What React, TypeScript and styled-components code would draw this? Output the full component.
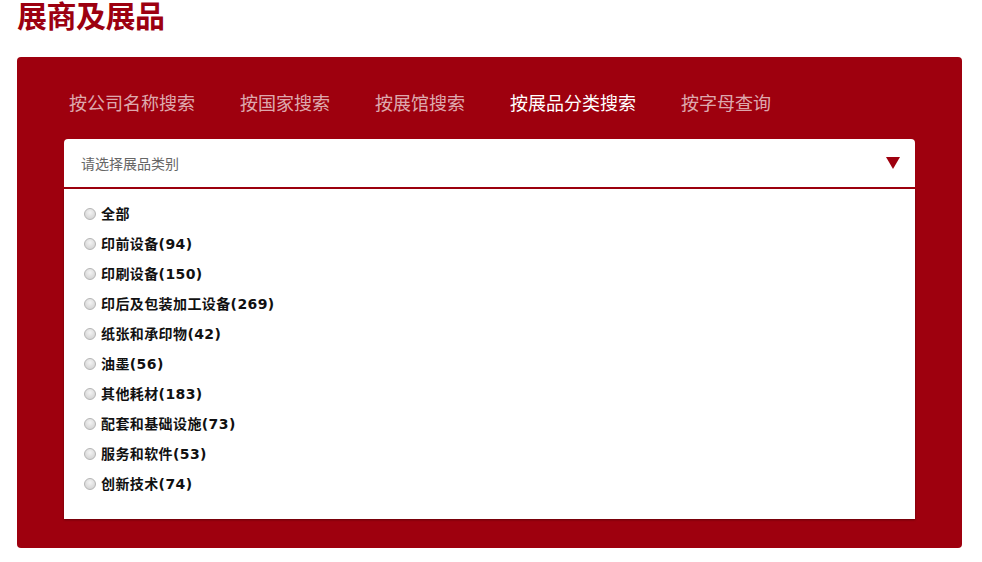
import React from "react";
import styled, { createGlobalStyle } from "styled-components";

const GlobalStyle = createGlobalStyle`
  body {
    margin: 0;
    background: #fff;
    font-family: "Noto Sans CJK SC", "Liberation Sans", sans-serif;
  }
`;

const tabs = ["按公司名称搜索", "按国家搜索", "按展馆搜索", "按展品分类搜索", "按字母查询"];

const categories = [
  "全部",
  "印前设备(94)",
  "印刷设备(150)",
  "印后及包装加工设备(269)",
  "纸张和承印物(42)",
  "油墨(56)",
  "其他耗材(183)",
  "配套和基础设施(73)",
  "服务和软件(53)",
  "创新技术(74)",
];

const App: React.FC = () => {
  return (
    <>
      <GlobalStyle />
      <Page>
        <Title>展商及展品</Title>
        <Panel>
          <TabRow>
            {tabs.map((t, i) => (
              <Tab key={t} active={i === 3}>
                {t}
              </Tab>
            ))}
          </TabRow>
          <SelectBox>
            <Placeholder>请选择展品类别</Placeholder>
            <Arrow />
          </SelectBox>
          <OptionList>
            {categories.map((c) => (
              <Option key={c}>
                <Radio />
                <OptionLabel>{c}</OptionLabel>
              </Option>
            ))}
          </OptionList>
        </Panel>
      </Page>
    </>
  );
};

const Page = styled.div`
  padding: 0 20px 0 17px;
`;

const Title = styled.h1`
  margin: 0 0 29px;
  font-size: 30px;
  line-height: 28px;
  font-weight: bold;
  color: #9c0010;
  letter-spacing: -0.5px;
`;

const Panel = styled.div`
  background: #9e000e;
  border-radius: 4px;
  padding: 27px 47px 29px;
`;

const TabRow = styled.div`
  display: flex;
  gap: 45px;
  padding-left: 5px;
  margin-bottom: 19px;
`;

const Tab = styled.span<{ active?: boolean }>`
  font-size: 18px;
  line-height: 36px;
  color: ${(p) => (p.active ? "#ffffff" : "rgba(255, 255, 255, 0.68)")};
  cursor: pointer;
`;

const SelectBox = styled.div`
  display: flex;
  align-items: center;
  justify-content: space-between;
  height: 48px;
  background: #fff;
  border-radius: 4px 4px 0 0;
  padding: 0 15px 0 17px;
  margin-bottom: 2px;
`;

const Placeholder = styled.span`
  font-size: 14px;
  color: #666;
`;

const Arrow = styled.span`
  width: 0;
  height: 0;
  border-left: 7px solid transparent;
  border-right: 7px solid transparent;
  border-top: 12px solid #9e000e;
`;

const OptionList = styled.div`
  background: #fff;
  padding: 9px 20px 21px;
  box-shadow: 0 1px 2px rgba(0, 0, 0, 0.35);
`;

const Option = styled.label`
  display: flex;
  align-items: center;
  gap: 5px;
  height: 30px;
`;

const Radio = styled.span`
  width: 10px;
  height: 10px;
  border-radius: 50%;
  border: 1px solid #b5b5b5;
  background: radial-gradient(circle at 50% 35%, #f4f4f4 0%, #dcdcdc 60%, #cfcfcf 100%);
  margin-top: 2px;
`;

const OptionLabel = styled.span`
  font-family: "DejaVu Sans", "Noto Sans CJK SC", sans-serif;
  font-size: 14px;
  font-weight: bold;
  letter-spacing: 0.4px;
  color: #111;
`;

export default App;
